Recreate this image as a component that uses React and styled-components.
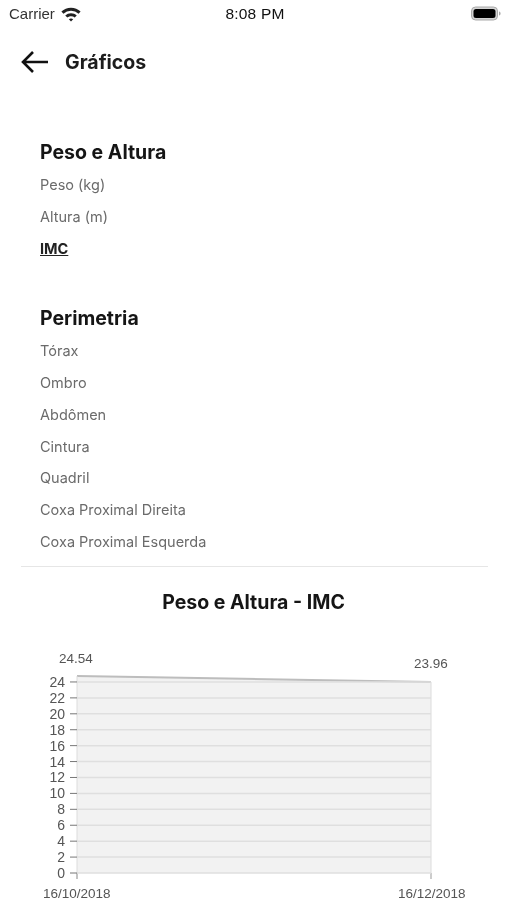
import React from 'react'
import styled, { createGlobalStyle } from 'styled-components'

const GlobalStyle = createGlobalStyle`
  html, body {
    margin: 0;
    padding: 0;
    background: #fff;
    overflow: hidden;
  }
  * {
    box-sizing: border-box;
  }
`

const Screen = styled.div`
  width: 507px;
  height: 900px;
  overflow: hidden;
  font-family: 'Inter', sans-serif;
  color: #111;
  background: #fff;
  filter: blur(0.5px);
`

const StatusBar = styled.div`
  display: grid;
  grid-template-columns: 1fr auto 1fr;
  align-items: center;
  height: 27px;
  padding: 0 6px 0 9px;
  font-family: 'Liberation Sans', sans-serif;
  font-size: 15px;
  color: #222;
`

const StatusLeft = styled.div`
  display: flex;
  align-items: center;
  gap: 4px;
  color: #333;
`

const StatusTime = styled.div`
  font-size: 15.5px;
  letter-spacing: 0.2px;
  color: #111;
`

const StatusRight = styled.div`
  display: flex;
  justify-content: flex-end;
`

const Header = styled.div`
  display: flex;
  align-items: center;
  gap: 16px;
  height: 46px;
  margin-top: 12px;
  padding-left: 21px;
`

const Title = styled.h1`
  margin: 0;
  font-size: 19.5px;
  font-weight: 700;
  color: #1c1c1c;
`

const Menu = styled.div`
  padding: 54px 40px 0;
`

const Section = styled.section`
  margin-bottom: 40.5px;

  &:last-child {
    margin-bottom: 0;
  }
`

const SectionTitle = styled.h2`
  margin: 0 0 4px;
  height: 26px;
  line-height: 26px;
  font-size: 19.5px;
  font-weight: 700;
  color: #151515;
`

const MenuItem = styled.div`
  height: 31.85px;
  line-height: 31.85px;
  font-size: 14.5px;
  color: ${p => (p.$active ? '#222' : '#6b6b6b')};
  font-weight: ${p => (p.$active ? 700 : 400)};
  text-decoration: ${p => (p.$active ? 'underline' : 'none')};
`

const Divider = styled.hr`
  margin: 8px 19px 0 21px;
  border: 0;
  border-top: 1px solid #e6e6e6;
`

const ChartTitle = styled.h3`
  margin: 22px 0 0;
  height: 26px;
  line-height: 26px;
  font-size: 19.5px;
  font-weight: 700;
  text-align: center;
  color: #151515;
`

const ChartBox = styled.div`
  margin-top: 29px;
  height: 270px;

  svg {
    display: block;
  }
`

const WifiIcon = () => (
  <svg width="24" height="18" viewBox="0 0 20 15">
    <path d="M10 2.2c3 0 5.900 1.200 8 3.300l-1.700 1.800A9 9 0 0 0 10 4.700a9 9 0 0 0-6.300 2.600L2 5.500a11.300 11.300 0 0 1 8-3.300z" fill="#222" />
    <path d="M10 6.800c1.800 0 3.500.7 4.800 2l-1.700 1.700A4.400 4.400 0 0 0 10 9.300c-1.200 0-2.300.5-3.100 1.200L5.200 8.800a6.800 6.800 0 0 1 4.800-2z" fill="#222" />
    <path d="M10 11.200c.7 0 1.300.3 1.800.7L10 13.800l-1.800-1.900c.5-.4 1.100-.7 1.800-.7z" fill="#222" />
  </svg>
)

const BatteryIcon = () => (
  <svg width="30" height="15" viewBox="0 0 30 15">
    <rect x="0.500" y="1" width="26" height="13" rx="4" fill="#d4d4d4" stroke="#aaa" />
    <rect x="2.500" y="3" width="22" height="9" rx="2.500" fill="#000" />
    <path d="M28 5.500c1 .3 1.600 1 1.600 2s-.6 1.700-1.600 2z" fill="#aaa" />
  </svg>
)

const BackArrow = () => (
  <svg width="28" height="24" viewBox="0 0 28 24">
    <path d="M27 12H2M12 2 2 12l10 10" fill="none" stroke="#111" strokeWidth="2.600" />
  </svg>
)

const ticks = [0, 2, 4, 6, 8, 10, 12, 14, 16, 18, 20, 22, 24]
const plotLeft = 77
const plotRight = 431
const chartTop = 644
const tickY = v => 873 - v * 7.96 - chartTop

const LineChart = () => (
  <svg width="507" height="256" viewBox="0 0 507 256" fontFamily="Liberation Sans, sans-serif">
    <polygon
      points={`${plotLeft},${676 - chartTop} ${plotRight},${682 - chartTop} ${plotRight},${tickY(0)} ${plotLeft},${tickY(0)}`}
      fill="#f2f2f2"
    />
    <line x1={plotLeft} y1={676 - chartTop} x2={plotRight} y2={682 - chartTop} stroke="#bdbdbd" strokeWidth="2" />
    <line x1={plotLeft} y1={676 - chartTop} x2={plotLeft} y2={tickY(0) + 6} stroke="#dcdcdc" />
    <line x1={plotRight} y1={682 - chartTop} x2={plotRight} y2={tickY(0)} stroke="#dcdcdc" />
    <line x1={plotRight} y1={tickY(0)} x2={plotRight} y2={tickY(0) + 6} stroke="#999" />
    <line x1={plotLeft} y1={tickY(0)} x2={plotLeft} y2={tickY(0) + 6} stroke="#999" />
    {ticks.map(v => (
      <g key={v}>
        <line x1={plotLeft} y1={tickY(v)} x2={plotRight} y2={tickY(v)} stroke="#dfdfdf" strokeWidth="1.500" />
        <line x1={70} y1={tickY(v)} x2={plotLeft} y2={tickY(v)} stroke="#777" />
        <text x={65} y={tickY(v) + 5} textAnchor="end" fontSize="14" fill="#555">{v}</text>
      </g>
    ))}
    <text x={59} y={663 - chartTop} fontSize="13.500" fill="#555">24.54</text>
    <text x={414} y={668 - chartTop} fontSize="13.500" fill="#555">23.96</text>
    <text x={43} y={898 - chartTop} fontSize="13.500" fill="#555">16/10/2018</text>
    <text x={398} y={898 - chartTop} fontSize="13.500" fill="#555">16/12/2018</text>
  </svg>
)

const groups = [
  { title: 'Peso e Altura', items: ['Peso (kg)', 'Altura (m)', 'IMC'], active: 'IMC' },
  {
    title: 'Perimetria',
    items: ['Tórax', 'Ombro', 'Abdômen', 'Cintura', 'Quadril', 'Coxa Proximal Direita', 'Coxa Proximal Esquerda'],
  },
]

const App = () => (
  <Screen>
    <GlobalStyle />
    <StatusBar>
      <StatusLeft>
        Carrier
        <WifiIcon />
      </StatusLeft>
      <StatusTime>8:08 PM</StatusTime>
      <StatusRight>
        <BatteryIcon />
      </StatusRight>
    </StatusBar>
    <Header>
      <BackArrow />
      <Title>Gráficos</Title>
    </Header>
    <Menu>
      {groups.map(group => (
        <Section key={group.title}>
          <SectionTitle>{group.title}</SectionTitle>
          {group.items.map(item => (
            <MenuItem key={item} $active={item === group.active}>{item}</MenuItem>
          ))}
        </Section>
      ))}
    </Menu>
    <Divider />
    <ChartTitle>Peso e Altura - IMC</ChartTitle>
    <ChartBox>
      <LineChart />
    </ChartBox>
  </Screen>
)

export default App
